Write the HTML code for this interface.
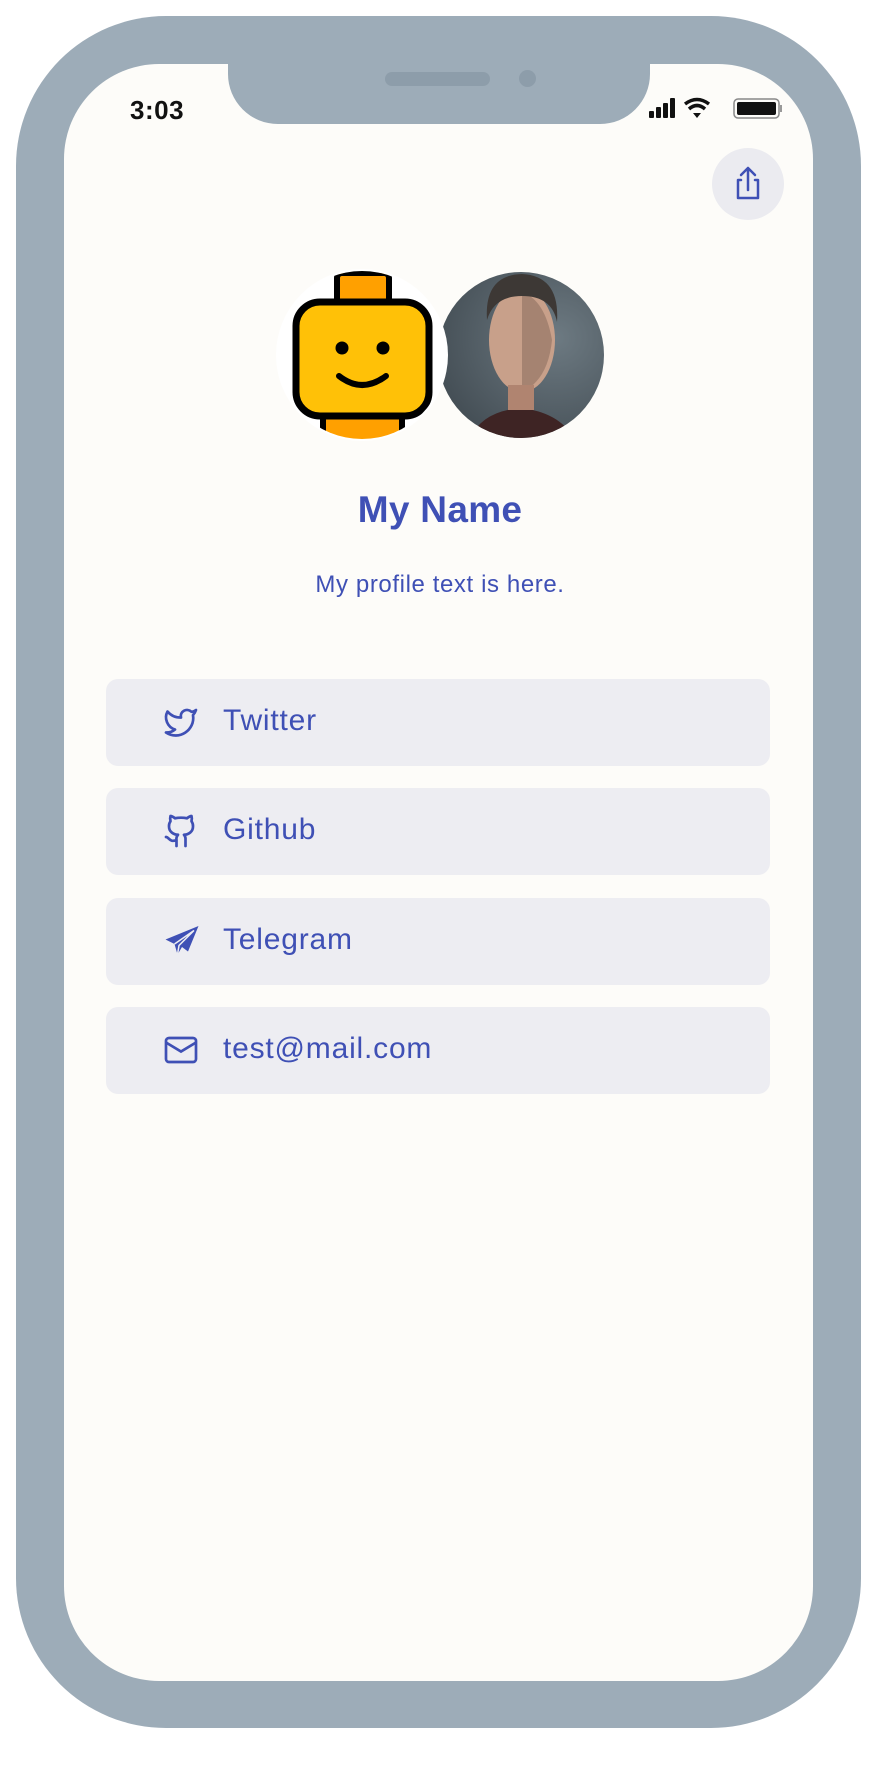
<!DOCTYPE html>
<html><head><meta charset="utf-8"><style>
html,body{margin:0;padding:0;background:#fff;width:880px;height:1766px;overflow:hidden;font-family:"Liberation Sans",sans-serif}
.phone{position:absolute;left:16px;top:16px;width:845px;height:1712px;background:#9dacb8;border-radius:150px}
.screen{position:absolute;left:64px;top:64px;width:749px;height:1617px;background:#fdfcf9;border-radius:95px;overflow:hidden}
.notch{position:absolute;left:228px;top:56px;width:422px;height:68px;background:#9dacb8;border-radius:0 0 50px 50px}
.spk{position:absolute;left:385px;top:72px;width:105px;height:14px;border-radius:7px;background:#8d9daa}
.cam{position:absolute;left:519px;top:70px;width:17px;height:17px;border-radius:50%;background:#8d9daa}
.time{position:absolute;left:130px;top:95px;font-size:26px;font-weight:bold;color:#111;letter-spacing:0.5px}
.share{position:absolute;left:712px;top:148px;width:72px;height:72px;border-radius:50%;background:#ebebf0}
.name{position:absolute;left:0;width:880px;top:489px;text-align:center;font-size:37px;font-weight:bold;color:#3f50b5;letter-spacing:0.3px}
.sub{position:absolute;left:0;width:880px;top:571px;text-align:center;font-size:24px;color:#3f50b5;letter-spacing:0.6px}
.card{position:absolute;left:106px;width:664px;height:87px;border-radius:12px;background:#ededf2}
.card span{position:absolute;left:117px;top:25px;font-size:30px;color:#3f50b5;letter-spacing:0.8px}
.card svg{position:absolute;left:57px;top:25px}
</style></head><body>
<div class="phone"></div>
<div class="screen"></div>
<div class="notch"></div>
<div class="spk"></div><div class="cam"></div>
<div class="time">3:03</div>
<svg style="position:absolute;left:648px;top:96px" width="135" height="26" viewBox="0 0 135 26">
<rect x="1" y="15" width="5" height="7" rx="1" fill="#111"/><rect x="8" y="11" width="5" height="11" rx="1" fill="#111"/><rect x="15" y="7" width="5" height="15" rx="1" fill="#111"/><rect x="22" y="2" width="5" height="20" rx="1" fill="#111"/>
<path d="M37 8 Q49 -1 61 8" stroke="#111" stroke-width="3.5" fill="none"/><path d="M41 13 Q49 6 57 13" stroke="#111" stroke-width="3.5" fill="none"/><path d="M45 17 L49 22 L53 17 Z" fill="#111"/>
<rect x="86" y="3" width="45" height="19" rx="4" fill="none" stroke="#888" stroke-width="1.5"/><rect x="89" y="6" width="39" height="13" rx="2" fill="#111"/><rect x="132" y="9" width="2" height="7" fill="#999"/>
</svg>
<div class="share"><svg width="72" height="72" viewBox="0 0 72 72"><path d="M36 20 V42 M29 27 L36 20 L43 27 M29 32 H26 V50 H46 V32 H43" stroke="#3f50b5" stroke-width="2.5" fill="none" stroke-linecap="round" stroke-linejoin="round"/></svg></div>
<svg style="position:absolute;left:270px;top:262px" width="340" height="190" viewBox="270 262 340 190">
<defs><clipPath id="c1"><circle cx="362" cy="355" r="84"/></clipPath>
<radialGradient id="bg" cx="0.7" cy="0.4" r="0.7"><stop offset="0" stop-color="#6d7a82"/><stop offset="1" stop-color="#444e55"/></radialGradient>
<clipPath id="c2"><circle cx="521" cy="355" r="83"/></clipPath></defs>
<g clip-path="url(#c2)">
<rect x="430" y="270" width="180" height="170" fill="url(#bg)"/>
<path d="M470 440 Q480 412 520 408 Q560 412 575 440 Z" fill="#3e2424"/>
<ellipse cx="522" cy="340" rx="33" ry="52" fill="#c8a08a"/>
<path d="M522 292 Q545 300 552 340 Q548 380 522 392 Z" fill="#8e7060" opacity="0.6"/>
<path d="M487 320 Q484 275 522 274 Q560 276 557 322 Q552 296 522 296 Q494 296 487 320 Z" fill="#3d3835"/>
<rect x="508" y="385" width="26" height="25" fill="#b08470"/>
</g>
<circle cx="362" cy="355" r="86" fill="#fff"/>
<g clip-path="url(#c1)">
<rect x="337" y="273" width="52" height="34" rx="5" fill="#ffa000" stroke="#000" stroke-width="6"/>
<rect x="323" y="405" width="79" height="40" fill="#ffa000" stroke="#000" stroke-width="6"/>
<rect x="296" y="302" width="133" height="114" rx="24" fill="#ffc107" stroke="#000" stroke-width="7"/>
<circle cx="342" cy="348" r="6.5" fill="#000"/><circle cx="383" cy="348" r="6.5" fill="#000"/>
<path d="M339 376 Q362 394 386 376" stroke="#000" stroke-width="6" fill="none" stroke-linecap="round"/>
</g>
</svg>
<div class="name">My Name</div>
<div class="sub">My profile text is here.</div>
<div class="card" style="top:679px"><svg width="36" height="36" viewBox="0 0 24 24"><path d="M22 4s-.7 2.1-2 3.4c1.6 10-9.4 17.3-18 11.6 2.2.1 4.4-.6 6-2C3 15.5.5 9.6 3 5c2.2 2.6 5.6 4.1 9 4-.9-4.2 4-6.6 7-3.8 1.1 0 3-1.2 3-1.2z" stroke="#3f50b5" stroke-width="1.8" fill="none" stroke-linejoin="round"/></svg><span>Twitter</span></div>
<div class="card" style="top:788px"><svg width="36" height="36" viewBox="0 0 24 24"><path d="M15 22v-4a4.8 4.8 0 0 0-1-3.5c3 0 6-2 6-5.5.1-1.3-.3-2.5-1-3.5.3-1.2.3-2.4 0-3.5 0 0-1 0-3 1.5-2.6-.5-5.4-.5-8 0C6 2 5 2 5 2c-.3 1.1-.3 2.3 0 3.5A5.4 5.4 0 0 0 4 9c0 3.5 3 5.5 6 5.5-.4.5-.7 1-.9 1.6-.2.6-.2 1.300-.1 1.9v4 M9 18c-4.5 2-5-2-7-2" stroke="#3f50b5" stroke-width="1.8" fill="none" stroke-linecap="round" stroke-linejoin="round"/></svg><span>Github</span></div>
<div class="card" style="top:898px"><svg width="38" height="36" viewBox="0 0 24 24"><path d="M23 2 L1 11 L7 14 L9 21 L12 16 L16 19 Z" fill="#3f50b5"/><path d="M7 14 L20 5 L10 15 L9 21" stroke="#ededf2" stroke-width="1" fill="none"/></svg><span>Telegram</span></div>
<div class="card" style="top:1007px"><svg width="36" height="36" viewBox="0 0 24 24"><rect x="2" y="4" width="20" height="16" rx="2" stroke="#3f50b5" stroke-width="1.8" fill="none"/><path d="M2 7l10 6 10-6" stroke="#3f50b5" stroke-width="1.8" fill="none"/></svg><span>test@mail.com</span></div>
</body></html>
